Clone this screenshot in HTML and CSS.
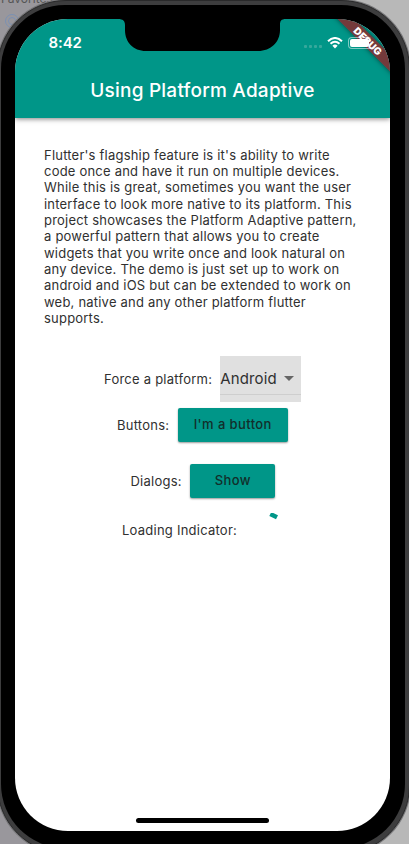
FILE: index.html
```html
<!DOCTYPE html>
<html lang="en">
<head>
<meta charset="utf-8">
<title>Using Platform Adaptive</title>
<link rel="stylesheet" href="styles.css">
</head>
<body>
<div class="desktop">
  <span class="desktop-label">Favorites</span>
  <svg class="desktop-icon" width="16" height="16" viewBox="0 0 16 16" fill="none" stroke="#7b91b3"><circle cx="8" cy="8" r="6.5"/><circle cx="8" cy="8" r="3.5"/></svg>
  <div class="phone">
    <div class="bezel">
      <div class="screen">
        <header class="app-bar">
          <div class="status-bar">
            <span class="time">8:42</span>
            <div class="status-icons">
              <div class="cell"><i></i><i></i><i></i><i></i></div>
              <svg class="wifi" width="16" height="12" viewBox="0 0 16 12" fill="none" stroke="#fff" stroke-width="2"><path d="M1 4.2Q8-2.2 15 4.2M3.5 6.8Q8 2.7 12.5 6.8"/><path d="M5.4 8.7Q8 6.5 10.6 8.7L8 11.4Z" fill="#fff" stroke="none"/></svg>
              <div class="battery"><b></b></div>
            </div>
          </div>
          <h1>Using Platform Adaptive</h1>
        </header>
        <main>
          <p>Flutter's flagship feature is it's ability to write<br>code once and have it run on multiple devices.<br>While this is great, sometimes you want the user<br>interface to look more native to its platform. This<br>project showcases the Platform Adaptive pattern,<br>a powerful pattern that allows you to create<br>widgets that you write once and look natural on<br>any device. The demo is just set up to work on<br>android and iOS but can be extended to work on<br>web, native and any other platform flutter<br>supports.</p>
          <div class="row platform"><span>Force a platform:</span><div class="dropdown"><div class="value"><span>Android</span><svg width="10" height="5" viewBox="0 0 10 5"><path d="M0 0H10L5 5Z" fill="#666"/></svg></div></div></div>
          <div class="row buttons"><span>Buttons:</span><button class="wide">I'm a button</button></div>
          <div class="row dialogs"><span>Dialogs:</span><button>Show</button></div>
          <div class="row loading"><span>Loading Indicator:</span><svg width="34" height="34" viewBox="0 0 34 34"><path d="M17.3 1L24 4.3" stroke="#009688" stroke-width="4.4"/></svg></div>
        </main>
        <svg class="notch" width="168" height="32" viewBox="0 0 168 32"><path d="M0 0C5 0 7 2 7 6V11C7 23 15 32 28 32H140C153 32 162 23 162 11V6C162 2 163 0 168 0Z"/></svg>
        <div class="debug">DEBUG</div>
        <div class="home"></div>
      </div>
    </div>
  </div>
</div>
</body>
</html>
```
FILE: styles.css
```css
* { box-sizing: border-box; }
body { margin: 0; font-family: Inter, "Liberation Sans", sans-serif; color: #303030; }
.desktop { position: relative; width: 409px; height: 844px; overflow: hidden; background: linear-gradient(90deg, #99979c 0 50%, #b8b8b8 50%); }
.desktop-label { position: absolute; left: 1px; top: -9px; font-size: 12px; color: #555; }
.desktop-icon { position: absolute; left: 4px; top: 13px; }
.phone { position: relative; width: 413px; height: 854px; margin-left: -3px; padding: 2px 3px; border: 1px solid #29292a; border-radius: 69px; background: #3d3d3e; box-shadow: 0 0 0 1px #777779; }
.bezel { width: 404px; height: 843px; margin-top: 2px; padding: 14px 15px 0 14px; border-radius: 64px; background: #000; }
.screen { position: relative; width: 375px; height: 812px; overflow: hidden; border-radius: 53px; background: #fff; }
.app-bar { height: 99px; background: #009688; color: #fff; box-shadow: 0 1px 5px rgba(0,0,0,.5); }
.status-bar { display: flex; justify-content: space-between; height: 48px; padding: 15px 18px 0 33.5px; }
.time { font-size: 15px; line-height: 18px; font-weight: 600; letter-spacing: -.1px; }
.status-icons { position: relative; z-index: 2; display: flex; align-items: flex-start; padding-top: 3px; }
.cell { display: flex; gap: 2px; margin: 8px 5px 0 0; }
.cell i { width: 3px; height: 3px; border-radius: 1px; background: #36a89c; }
.battery { width: 24px; height: 12px; margin-left: 5px; padding: 1px; border: 1px solid rgba(255,255,255,.5); border-right-color: transparent; border-radius: 4px; }
.battery b { display: block; width: 19px; height: 8px; border-radius: 2px; background: #fff; }
h1 { margin: 12px 0 0; text-align: center; font-size: 19px; line-height: 24px; font-weight: 500; letter-spacing: .22px; }
main { padding: 28.6px 28px 0 29px; font-size: 13px; }
p { margin: 0; white-space: nowrap; font-size: 13px; line-height: 16.35px; letter-spacing: .21px; }
.row { display: flex; align-items: center; letter-spacing: .24px; white-space: nowrap; }
.platform { height: 46px; margin: 29.4px 0 0 60px; }
.dropdown { width: 81px; height: 46px; margin-left: 8px; background: #e0e0e0; }
.value { display: flex; align-items: center; justify-content: space-between; height: 39px; padding: 8px 7px 0 0; border-bottom: 1px solid #cecece; font-size: 15px; letter-spacing: .15px; }
.buttons { height: 34px; margin: 6px 0 0 73px; }
button { width: 85px; height: 34px; margin-left: 8.5px; padding: 0 0 1px; border: 0; border-radius: 2px; background: #009688; color: #122e2b; font: 500 13px Inter, sans-serif; letter-spacing: .4px; box-shadow: 0 1px 2px rgba(0,0,0,.4); }
.wide { width: 110px; }
.dialogs { height: 34px; margin: 22px 0 0 86.5px; }
.loading { height: 34px; margin: 15px 0 0 78px; }
.loading svg { margin-left: 16px; }
.notch { position: absolute; left: 103px; top: 0; }
.debug { position: absolute; z-index: 1; right: -32.5px; top: 16px; width: 110px; height: 12px; transform: rotate(45deg); background: rgba(145,35,40,.8); box-shadow: 0 0 5px rgba(0,0,0,.5); color: #fff; text-align: center; font-size: 10px; line-height: 12px; font-weight: 900; }
.home { position: absolute; left: 121px; bottom: 8px; width: 133px; height: 5px; border-radius: 3px; background: #000; }
```
